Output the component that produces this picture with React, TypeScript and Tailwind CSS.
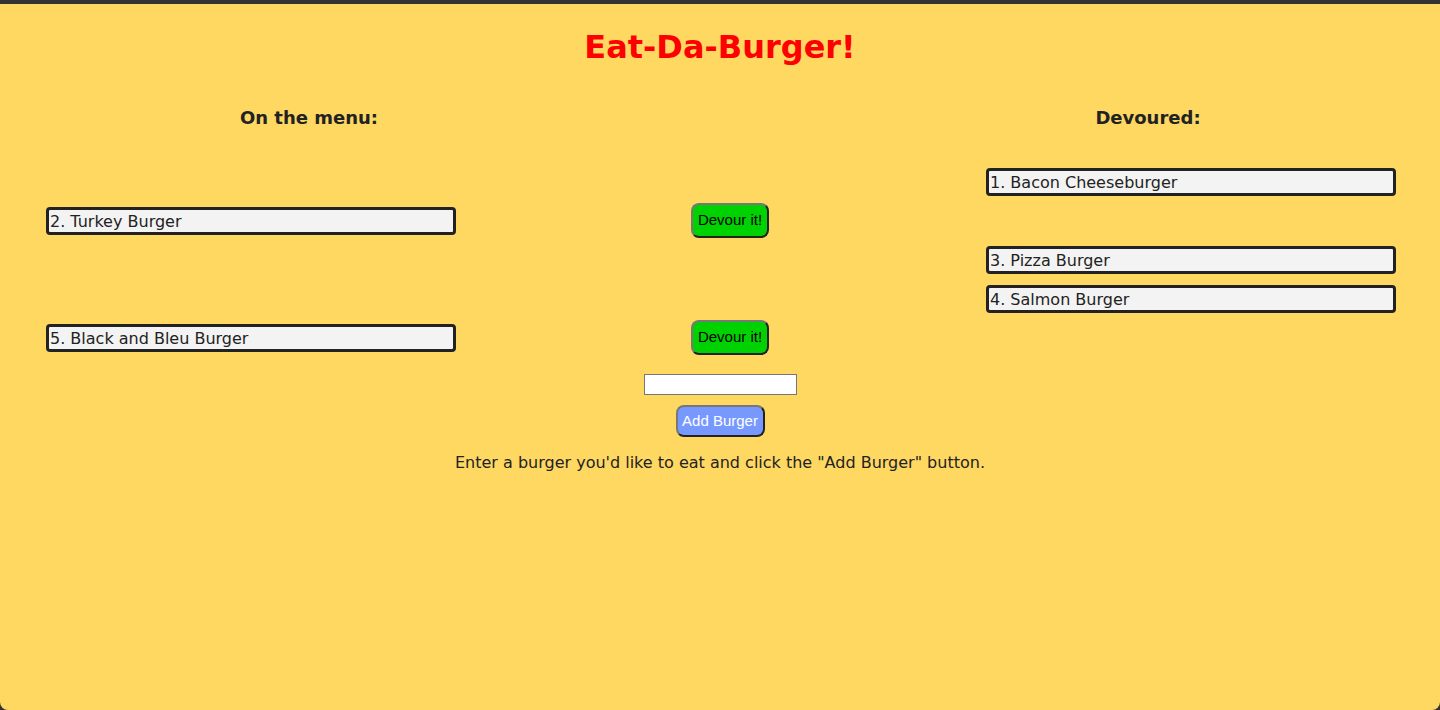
const burgers = [
  { id: 1, name: "Bacon Cheeseburger", devoured: true },
  { id: 2, name: "Turkey Burger", devoured: false },
  { id: 3, name: "Pizza Burger", devoured: true },
  { id: 4, name: "Salmon Burger", devoured: true },
  { id: 5, name: "Black and Bleu Burger", devoured: false },
];

const BurgerBox = ({ id, name }: { id: number; name: string }) => (
  <div className="w-[410px] h-[28px] border-[3px] border-[#222] rounded-[4px] bg-[#f3f3f3] pl-[1px] pt-[1px] text-[16px] leading-[21px] text-[#222]">
    {id}. {name}
  </div>
);

export default function App() {
  return (
    <div className="min-h-screen bg-[#333] pt-[4px] font-['DejaVu_Sans',Verdana,sans-serif]">
      <div className="h-[706px] bg-[#ffd862] rounded-b-[8px]">
        <h1 className="pt-[23px] text-center text-[32px] leading-[40px] font-bold text-[#ff0000]">
          Eat-Da-Burger!
        </h1>

        <div className="flex mt-[39px] text-[18px] leading-[24px] font-bold text-[#222]">
          <h3 className="w-[618px] text-center">On the menu:</h3>
          <h3 className="ml-auto w-[584px] text-center">Devoured:</h3>
        </div>

        <div className="mt-[32px] pl-[46px]">
          {burgers.map((b) => (
            <div key={b.id} className="grid grid-cols-[410px_530px_410px] h-[39px] items-center">
              <div>{!b.devoured && <BurgerBox id={b.id} name={b.name} />}</div>
              <div className="pl-[235px]">
                {!b.devoured && (
                  <button className="w-[78px] h-[35px] bg-[#00d100] border-2 border-[#222] border-t-[#777] border-l-[#777] rounded-[8px] text-[15px] text-black font-['Liberation_Sans',Arial,sans-serif]">
                    Devour it!
                  </button>
                )}
              </div>
              <div>{b.devoured && <BurgerBox id={b.id} name={b.name} />}</div>
            </div>
          ))}
        </div>

        <form className="flex flex-col items-center mt-[17px]" onSubmit={(e) => e.preventDefault()}>
          <input type="text" className="w-[153px] h-[21px] bg-white border border-[#767676]" />
          <button className="mt-[10px] w-[89px] h-[32px] bg-[#7799ff] border-2 border-[#222] border-t-[#777] border-l-[#777] rounded-[8px] text-[15px] text-white font-['Liberation_Sans',Arial,sans-serif]">
            Add Burger
          </button>
          <p className="mt-[15px] text-[16px] leading-[22px] text-[#222]">
            Enter a burger you'd like to eat and click the "Add Burger" button.
          </p>
        </form>
      </div>
    </div>
  );
}
